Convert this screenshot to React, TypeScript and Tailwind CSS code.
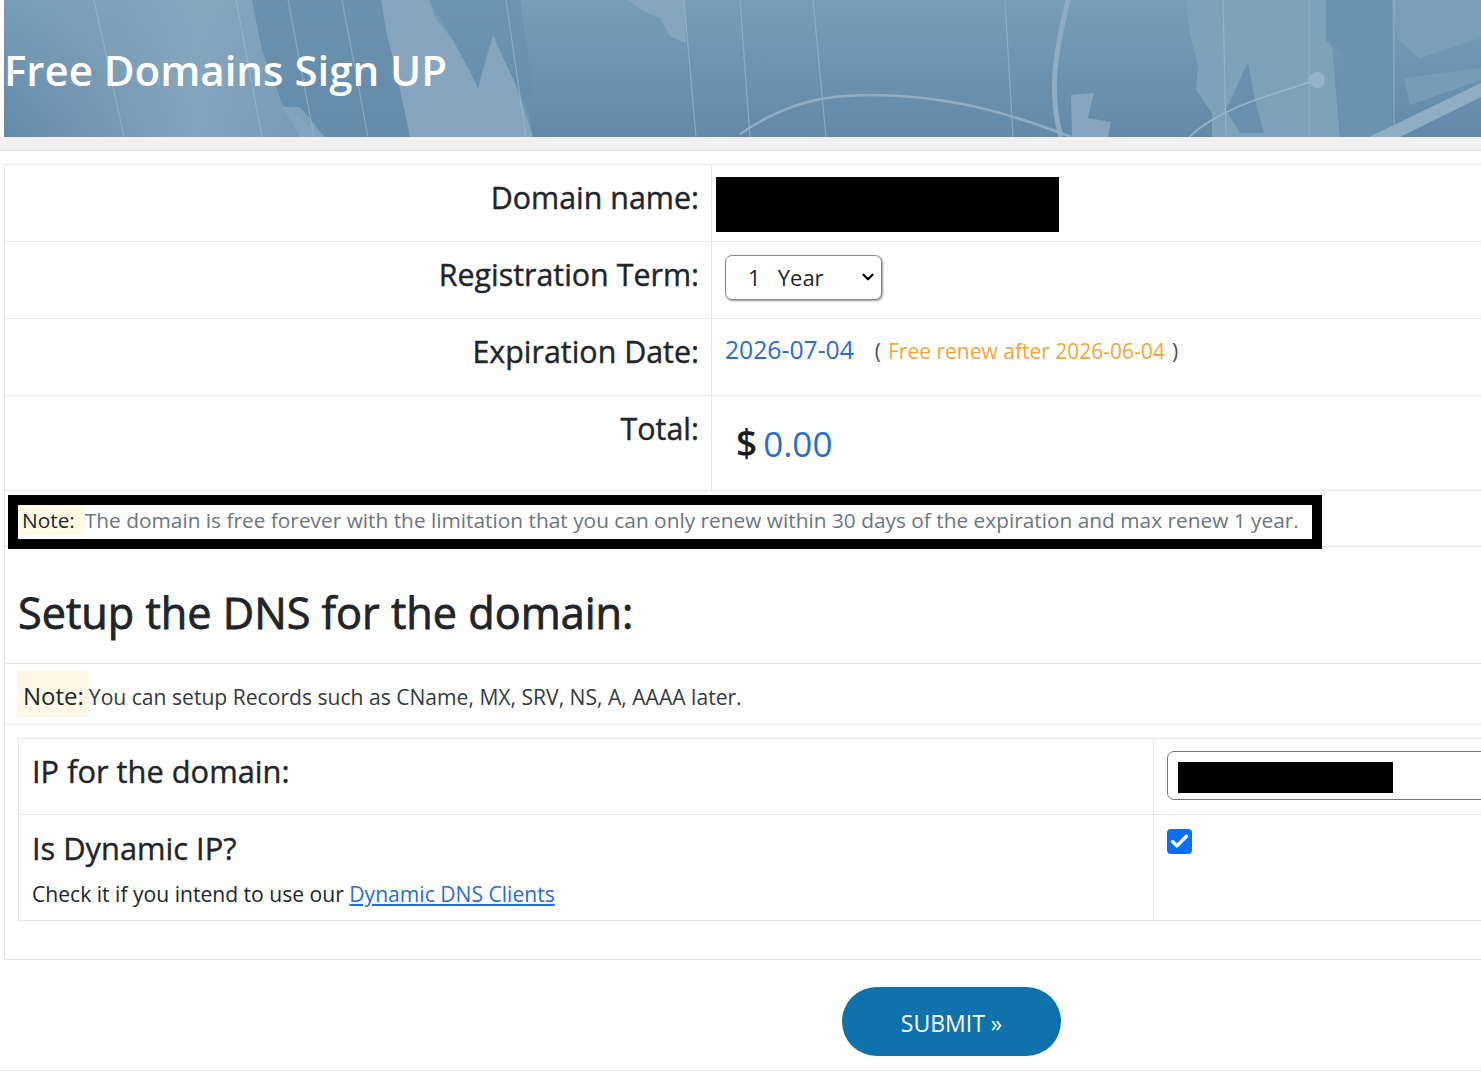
import { Check, ChevronDown } from 'lucide-react';

const font = { fontFamily: '"Open Sans", "Noto Sans", sans-serif' };

function BannerArt() {
  return (
    <svg className="absolute inset-0 h-full w-full" viewBox="4 0 1477 137" fill="none" preserveAspectRatio="none">
      <defs>
        <linearGradient id="leftGlow" x1="0" x2="1" y1="0" y2="0">
          <stop offset="0" stopColor="#86a7c0" stopOpacity="0" />
          <stop offset="0.6" stopColor="#86a7c0" stopOpacity="0.9" />
          <stop offset="1" stopColor="#86a7c0" stopOpacity="0.5" />
        </linearGradient>
      </defs>
      {/* land masses */}
      <path d="M4 0 L252 0 L262 50 L283 105 L325 137 L4 137 Z" fill="url(#leftGlow)" />
      <path d="M252 0 L381 0 L395 60 L410 137 L325 137 L300 107 L283 105 L262 50 Z" fill="#658cab" opacity="0.75" />
      <path d="M283 107 L300 107 L325 137 L300 137 Z" fill="#86a7c0" opacity="0.8" />
      <path d="M381 0 L429 0 L435 18 L453 40 L470 70 L478 88 L485 60 L493 35 L505 62 L516 85 L528 112 L533 137 L410 137 L398 80 L386 30 Z" fill="#86a6bf" />
      <path d="M429 0 L520 0 L530 70 L533 137 L516 85 L493 35 L478 88 L453 40 Z" fill="#668dab" opacity="0.6" />
      <path d="M627 0 L684 0 L686 43 L670 36 L660 18 L645 12 Z" fill="#86a6bf" />
      <path d="M1186 0 L1326 0 L1326 20 L1332 45 L1340 137 L1212 137 L1212 113 L1196 90 L1198 65 L1190 35 Z" fill="#7fa2bb" />
      <path d="M1248 62 L1255 100 L1264 133 L1240 133 L1226 110 Z" fill="#688fad" />
      <path d="M1326 0 L1392 0 L1392 137 L1340 137 L1338 90 L1346 60 L1326 40 Z" fill="#6b92af" />
      <path d="M1392 0 L1481 0 L1481 38 L1420 58 L1398 40 Z" fill="#7b9fb9" />
      <path d="M1404 78 L1481 68 L1481 80 L1410 105 Z" fill="#7b9fb9" opacity="0.8" />
      <path d="M1071 95 L1094 93 L1088 118 L1111 122 L1108 137 L1072 137 Z" fill="#86a6bf" />
      {/* grid lines and arcs */}
      <g stroke="#a3bed2" strokeWidth="1.2" opacity="0.6">
        <path d="M94 0 L124 137" />
        <path d="M236 0 L262 137" />
        <path d="M288 0 L314 137" />
        <path d="M342 0 L368 137" />
        <path d="M506 0 L526 137" />
        <path d="M684 0 L696 137" />
        <path d="M740 0 L750 137" />
        <path d="M813 0 L826 137" />
        <path d="M1005 0 L1013 137" />
        <path d="M1223 0 L1226 137" />
        <path d="M1309 0 L1309 137" />
        <path d="M1394 0 L1394 137" />
      </g>
      <path d="M1068 0 C1056 50 1048 90 1061 137" stroke="#8fadc4" strokeWidth="5" />
      <path d="M740 134 C790 100 830 95 868 95 C930 95 990 105 1071 137" stroke="#8fadc4" strokeWidth="2.5" />
      <path d="M1189 137 C1220 108 1270 95 1310 82" stroke="#9ab6ca" strokeWidth="1.5" />
      <circle cx="1317" cy="80" r="8" fill="#a3bed2" opacity="0.6" />
      <path d="M1369 137 L1481 83 L1481 97 L1400 137 Z" fill="#8fadc4" />
    </svg>
  );
}

function FormRow({ label, height, children }: { label: string; height: string; children: React.ReactNode }) {
  return (
    <div className={`flex border-b border-[#e6e6e6] ${height}`}>
      <div className="w-[707px] shrink-0 border-r border-[#e6e6e6] pr-[12px] pt-[13px] text-right text-[30.4px] leading-[40px] text-[#212529] [-webkit-text-stroke:0.4px_#212529]">
        {label}
      </div>
      <div className="flex-1">{children}</div>
    </div>
  );
}

export default function App() {
  return (
    <div className="h-[1080px] w-[1481px] overflow-hidden bg-white" style={font}>
      {/* Banner */}
      <div className="pl-1">
        <div className="relative h-[137px] bg-gradient-to-b from-[#789db8] to-[#6489a8]">
          <BannerArt />
          <h1 className="absolute left-0 top-[45px] text-[42px] leading-[50px] font-semibold text-white">Free Domains Sign UP</h1>
        </div>
      </div>
      <div className="h-[14px] border-b border-[#e2e2e2] bg-[#f1f1f1]"></div>

      {/* Form panel */}
      <div className="ml-1 mt-[13px] h-[796px] border-t border-b border-l border-[#e6e6e6]">
        <FormRow label="Domain name:" height="h-[77px]">
          <div className="ml-[4px] mt-[12px] h-[55px] w-[343px] bg-black"></div>
        </FormRow>
        <FormRow label="Registration Term:" height="h-[77px]">
          <div className="relative ml-[13px] mt-[13px] w-[157px]">
            <select className="h-[45px] w-full appearance-none rounded-[7px] border border-[#8a8a8a] bg-white pl-[22px] text-[22px] text-[#212529] shadow-[1px_1px_2px_rgba(0,0,0,0.4)]">
              <option>1&nbsp;&nbsp;&nbsp;Year</option>
            </select>
            <ChevronDown className="absolute right-[5px] top-[13px] h-[18px] w-[18px] text-black" strokeWidth={3} />
          </div>
        </FormRow>
        <FormRow label="Expiration Date:" height="h-[77px]">
          <div className="ml-[13px] mt-[13px] flex items-baseline text-[24.7px] leading-[36px]">
            <span className="text-[#2b6cd0]">2026-07-04</span>
            <span className="ml-[21px] text-[21px] text-[#495057]">(</span>
            <span className="ml-[7px] text-[21px] text-[#f0a53c]">Free renew after 2026-06-04</span>
            <span className="ml-[7px] text-[21px] text-[#495057]">)</span>
          </div>
        </FormRow>
        <FormRow label="Total:" height="h-[95px]">
          <div className="ml-[24px] mt-[22px] flex items-baseline text-[35px] leading-[50px]">
            <span className="text-[37px] font-semibold text-[#1a1d20]">$</span>
            <span className="ml-[6px] text-[#2b6cd0]">0.00</span>
          </div>
        </FormRow>

        {/* Note box */}
        <div className="h-[56px] border-b border-[#e6e6e6] pl-[3px] pt-[4px]">
          <div className="flex h-[54px] w-[1314px] items-center whitespace-nowrap border-[10px] border-black bg-white pb-[4px] text-[20.85px] leading-[30px]">
            <span className="bg-[#fff9e6] pl-[4px] pr-[10px] text-[#212529]">Note:</span>
            <span className="text-[#6c757d]">The domain is free forever with the limitation that you can only renew within 30 days of the expiration and max renew 1 year.</span>
          </div>
        </div>

        <div className="h-[117px] border-b border-[#e6e6e6] pl-[13px] pt-[37px]">
          <h2 className="text-[43.2px] leading-[58px] text-[#212529] [-webkit-text-stroke:0.8px_#212529]">Setup the DNS for the domain:</h2>
        </div>

        <div className="flex h-[61px] items-center border-b border-[#e6e6e6] pl-[13px]">
          <span className="flex h-[46px] items-center bg-[#fdf8e6] px-[5px] pt-[4px] text-[24px] text-[#212529]">Note:</span>
          <span className="pt-[6px] text-[21.1px] text-[#343a40]">You can setup Records such as CName, MX, SRV, NS, A, AAAA later.</span>
        </div>

        {/* DNS table */}
        <div className="ml-[13px] mt-[13px] border-t border-b border-l border-[#e6e6e6]">
          <div className="flex h-[76px] border-b border-[#e6e6e6]">
            <div className="w-[1135px] shrink-0 border-r border-[#e6e6e6] pl-[13px] pt-[12px] text-[30.8px] leading-[40px] text-[#212529] [-webkit-text-stroke:0.4px_#212529]">IP for the domain:</div>
            <div className="pl-[13px] pt-[12px]">
              <div className="h-[49px] w-[400px] rounded-[7px] border border-[#777] pl-[10px] pt-[10px]">
                <div className="h-[31px] w-[215px] bg-black"></div>
              </div>
            </div>
          </div>
          <div className="flex h-[105px]">
            <div className="w-[1135px] shrink-0 border-r border-[#e6e6e6] pl-[13px] pt-[13px] text-[#212529]">
              <div className="text-[30.8px] leading-[40px] [-webkit-text-stroke:0.4px_#212529]">Is Dynamic IP?</div>
              <div className="mt-[9px] text-[21.1px] leading-[34px]">
                Check it if you intend to use our <a href="#" className="text-[#2b6cd0] underline">Dynamic DNS Clients</a>
              </div>
            </div>
            <div className="pl-[13px] pt-[14px]">
              <div className="flex h-[25px] w-[25px] items-center justify-center rounded-[4px] bg-[#0d6efd]">
                <Check className="h-[21px] w-[21px] text-white" strokeWidth={4} />
              </div>
            </div>
          </div>
        </div>
      </div>

      {/* Submit */}
      <div className="mt-[27px] flex h-[84px] items-start justify-center border-b border-[#e2e2e2] pl-[422px]">
        <button className="h-[69px] w-[219px] rounded-full bg-[#0f72aa] pt-[3px] text-[23px] text-white">SUBMIT »</button>
      </div>
    </div>
  );
}
